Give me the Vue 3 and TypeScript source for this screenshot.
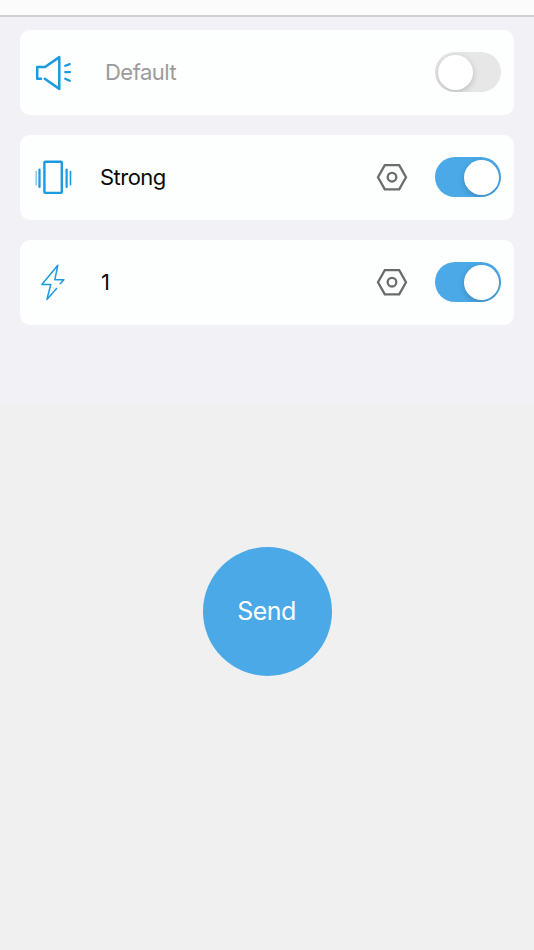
<script setup lang="ts">
import { ref } from 'vue'

type Kind = 'sound' | 'vibrate' | 'shock'
interface Row {
  kind: Kind
  label: string
  on: boolean
}

const rows = ref<Row[]>([
  { kind: 'sound', label: 'Default', on: false },
  { kind: 'vibrate', label: 'Strong', on: true },
  { kind: 'shock', label: '1', on: true },
])
</script>

<template>
  <main class="screen">
    <header class="topbar"></header>
    <section class="panel">
      <div v-for="row in rows" :key="row.kind" class="card">
        <svg v-if="row.kind === 'sound'" class="icon" viewBox="0 -0.5 40 40">
          <path d="M7 26.2H3.2V14.5H11L25.3 4.6V36.4L10.8 26.3" stroke-width="2.5" />
          <path d="M31.2 13.3 35.8 11.6M31.2 19.6H36M31.2 26.2 35.8 28.3" stroke-width="2.2" />
        </svg>
        <svg v-else-if="row.kind === 'vibrate'" class="icon" viewBox="0 -0.5 40 40">
          <rect x="10.4" y="4.2" width="17.4" height="31.2" rx="0.8" stroke-width="2.4" />
          <path d="M5.5 12V29.4M32.6 12V29.4" stroke-width="2.2" />
          <path d="M36.5 14V27.2" stroke-width="1.6" />
          <path class="faint" d="M2.2 14V27.2" stroke-width="1.6" />
        </svg>
        <svg v-else class="icon" viewBox="0 -0.5 40 40">
          <path d="M26.2 21.2 29.9 17.3H20.8L23.8 2.8L7.9 21.9H16.8L12.9 37L22.6 26" stroke-width="1.5" />
        </svg>
        <span class="label" :class="[row.kind, { muted: !row.on }]">{{ row.label }}</span>
        <svg v-if="row.on" class="gear" viewBox="0 0 32 28">
          <path d="M8.8 2.1H23.2L30 14.2L23.2 26.3H8.8L2 14.2Z" />
          <circle cx="16" cy="14.2" r="4.3" />
        </svg>
        <button class="switch" :class="{ on: row.on }" role="switch" :aria-checked="row.on" @click="row.on = !row.on">
          <span class="knob"></span>
        </button>
      </div>
    </section>
    <section class="action">
      <button class="send">Send</button>
    </section>
  </main>
</template>

<style>
body {
  background: #f0f0f0;
}
</style>

<style scoped>
.screen {
  height: 950px;
  display: flex;
  flex-direction: column;
  overflow: hidden;
  font-family: Inter, 'Liberation Sans', sans-serif;
}
.topbar {
  box-sizing: border-box;
  height: 17px;
  flex: none;
  background: #fbfbfb;
  border-bottom: 2px solid #d1d1d5;
}
.panel {
  box-sizing: border-box;
  height: 387px;
  flex: none;
  padding: 13px 20px 0;
  display: flex;
  flex-direction: column;
  gap: 20px;
  background: #f2f1f6;
}
.card {
  box-sizing: border-box;
  height: 85px;
  flex: none;
  display: flex;
  align-items: center;
  padding: 0 13px 1px 14px;
  border-radius: 10px;
  background: #fdfefe;
}
.icon {
  width: 40px;
  height: 40px;
  flex: none;
  fill: none;
  stroke: #1c9ade;
  stroke-linecap: round;
  stroke-linejoin: round;
}
.faint {
  opacity: 0.5;
}
.label {
  flex: 1;
  margin-left: 26px;
  font-size: 22px;
  line-height: 30px;
  letter-spacing: -0.52px;
  color: #0b0b0b;
}
.label.shock {
  padding-left: 1px;
}
.label.muted {
  margin-left: 31px;
  color: #9b9b9b;
}
.gear {
  width: 32px;
  height: 28px;
  margin-right: 27px;
  flex: none;
  fill: none;
  stroke: #6b6b6b;
  stroke-width: 2.3;
}
.switch {
  width: 66px;
  height: 40px;
  flex: none;
  box-sizing: border-box;
  display: flex;
  align-items: center;
  padding: 0 2.5px;
  border: 0;
  border-radius: 20px;
  background: #e7e7e8;
  overflow: hidden;
}
.switch.on {
  justify-content: flex-end;
  background: #4ba9e8;
}
.knob {
  width: 35px;
  height: 35px;
  border-radius: 50%;
  background: #fff;
  box-shadow: 0 2px 6px rgba(0, 0, 0, 0.2);
}
.action {
  flex: 1;
  display: flex;
  justify-content: center;
  align-items: flex-start;
  padding-top: 142.5px;
  background: #f0f0f0;
}
.send {
  width: 129px;
  height: 129px;
  padding: 0 1px 0 0;
  border: 0;
  border-radius: 50%;
  background: #4ba9e8;
  color: #fff;
  font-family: inherit;
  font-size: 25px;
  letter-spacing: -0.6px;
}
</style>
